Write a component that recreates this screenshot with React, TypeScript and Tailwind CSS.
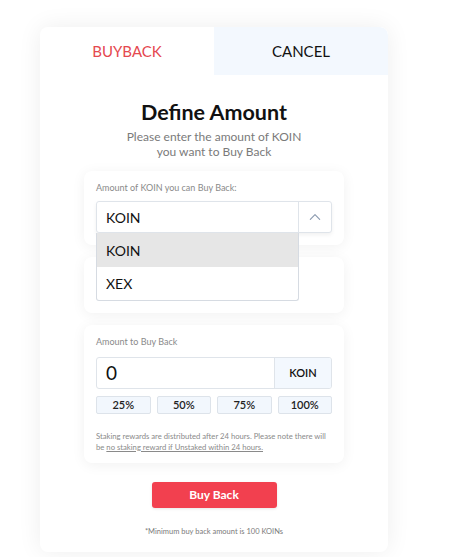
import React from 'react';

const percents = ['25%', '50%', '75%', '100%'];

const ChevronUp: React.FC = () => (
  <svg className="w-[14px] h-[14px] text-[#8c9bb0]" fill="none" stroke="currentColor" viewBox="0 0 24 24">
    <path strokeLinecap="round" strokeLinejoin="round" strokeWidth={2} d="M4 16l8-8 8 8" />
  </svg>
);

const App: React.FC = () => {
  return (
    <div className="w-[451px] h-[557px] bg-white overflow-hidden font-['Lato','Noto_Sans',sans-serif]">
      <div className="ml-[40px] mt-[27px] w-[348px] h-[525px] bg-white rounded-lg shadow-[0_0_24px_rgba(0,0,0,0.07)] overflow-hidden">
        <div className="flex h-[48px]">
          <button className="flex-1 flex items-center justify-center text-[15px] text-[#e5484f]">
            BUYBACK
          </button>
          <button className="flex-1 flex items-center justify-center text-[15px] text-[#111] bg-[#f3f8fe] rounded-tr-lg">
            CANCEL
          </button>
        </div>

        <div className="flex flex-col items-center">
          <h1 className="mt-[22px] text-[21.5px] leading-[30px] font-bold text-[#111]">Define Amount</h1>
          <p className="mt-[2px] text-[12px] leading-[15px] text-[#7a7a7a] text-center">
            Please enter the amount of KOIN
            <br />
            you want to Buy Back
          </p>

          <div className="relative mt-[12px] w-[260px] bg-white rounded-lg shadow-[0_2px_14px_rgba(0,0,0,0.06)] px-[12px] pt-[10px] pb-[12px] z-10">
            <div className="text-[9px] leading-[14px] text-[#8a8a8a]">Amount of KOIN you can Buy Back:</div>
            <div className="relative mt-[6px]">
              <div className="flex h-[32px] border border-[#dfe4ea] rounded-[3px] bg-white shadow-[0_2px_4px_rgba(0,0,0,0.06)]">
                <div className="flex-1 flex items-center pl-[9px] text-[14px] text-[#111]">KOIN</div>
                <div className="w-[33px] border-l border-[#dfe4ea] flex items-center justify-center">
                  <ChevronUp />
                </div>
              </div>
              <div className="absolute left-0 top-[32px] w-[203px] border border-t-0 border-[#d6dbe2] rounded-b-[3px] bg-white overflow-hidden">
                <div className="h-[34px] flex items-center pl-[9px] text-[14px] text-[#111] bg-[#e6e6e6]">KOIN</div>
                <div className="h-[33px] flex items-center pl-[9px] text-[14px] text-[#111]">XEX</div>
              </div>
            </div>
          </div>

          <div className="mt-[12px] w-[260px] h-[56px] bg-white rounded-lg shadow-[0_2px_14px_rgba(0,0,0,0.06)]" />

          <div className="mt-[12px] w-[260px] bg-white rounded-lg shadow-[0_2px_14px_rgba(0,0,0,0.06)] px-[12px] pt-[10px] pb-[11px]">
            <div className="text-[9px] leading-[14px] text-[#8a8a8a]">Amount to Buy Back</div>
            <div className="mt-[8px] flex h-[32px] border border-[#dfe4ea] rounded-[3px] overflow-hidden">
              <div className="flex-1 flex items-center pl-[9px] text-[19px] text-[#111]">0</div>
              <div className="w-[57px] bg-[#f3f8fe] border-l border-[#dfe4ea] flex items-center justify-center text-[11px] font-semibold text-[#111]">
                KOIN
              </div>
            </div>
            <div className="mt-[7px] grid grid-cols-4 gap-[6px]">
              {percents.map((p) => (
                <button
                  key={p}
                  className="h-[18px] bg-[#f2f7fd] border border-[#dde3ea] rounded-[2px] text-[11px] font-semibold text-[#222] flex items-center justify-center"
                >
                  {p}
                </button>
              ))}
            </div>
            <div className="mt-[17px] text-[7.7px] leading-[10.5px] text-[#8a8a8a]">
              <div>Staking rewards are distributed after 24 hours. Please note there will</div>
              <div>
                be <span className="underline">no staking reward if Unstaked within 24 hours.</span>
              </div>
            </div>
          </div>

          <button className="mt-[19px] w-[125px] h-[26px] bg-[#f2404f] rounded-[3px] text-white text-[12px] font-bold shadow-[0_1px_3px_rgba(0,0,0,0.1)]">
            Buy Back
          </button>
          <p className="mt-[18px] text-[7.5px] text-[#7a7a7a]">*Minimum buy back amount is 100 KOINs</p>
        </div>
      </div>
    </div>
  );
};

export default App;
